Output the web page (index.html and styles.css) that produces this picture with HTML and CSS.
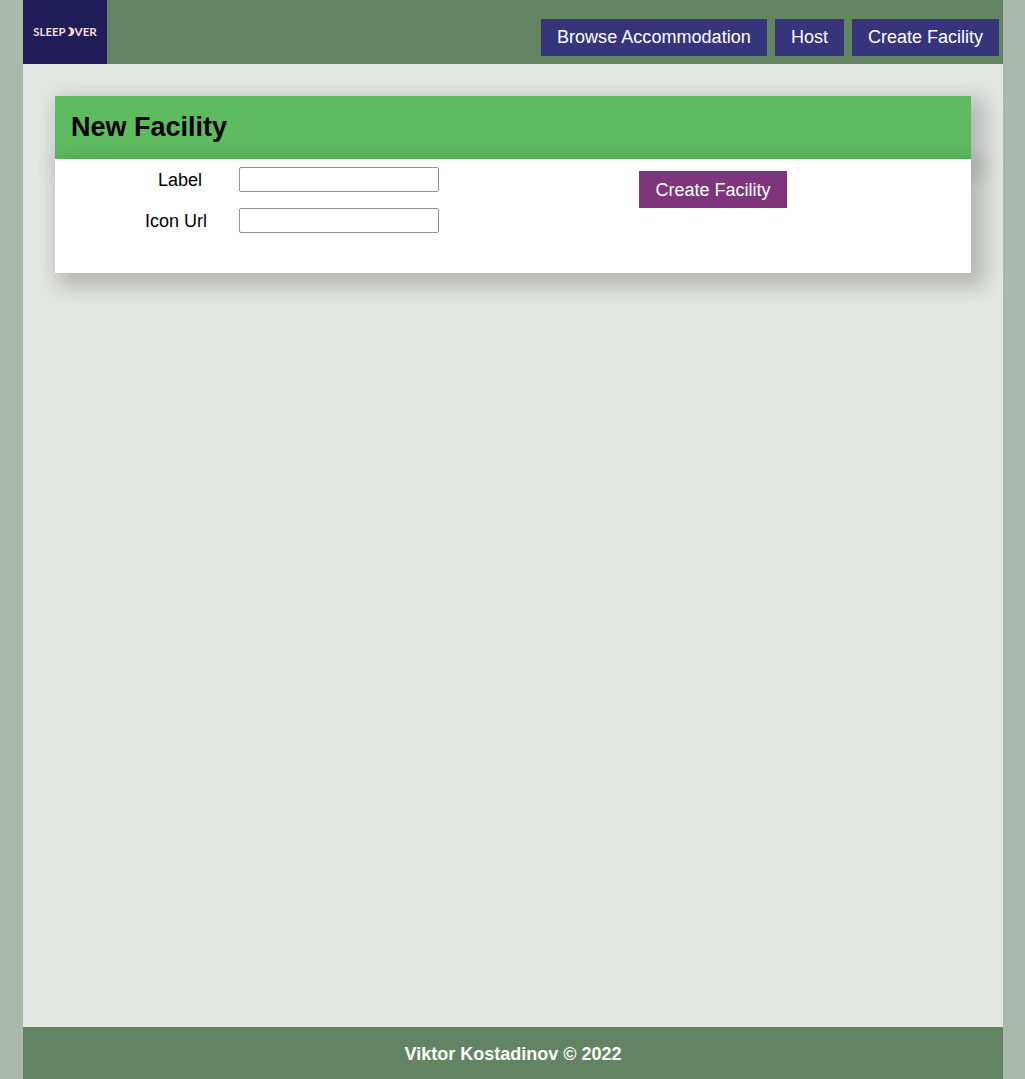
FILE: index.html
```html
<!DOCTYPE html>
<html lang="en">
<head>
<meta charset="utf-8">
<title>Sleepover</title>
<link rel="stylesheet" href="styles.css">
</head>
<body>
<div class="page">
  <header class="topbar">
    <a class="logo" href="#">
      <svg width="84" height="64" viewBox="0 0 84 64" aria-label="Sleepover">
        <g class="logo-text">
          <text x="10.3" y="36" textLength="32.2" lengthAdjust="spacingAndGlyphs">SLEEP</text>
          <text x="51.6" y="36" textLength="22.2" lengthAdjust="spacingAndGlyphs">VER</text>
        </g>
        <path class="moon" d="M44.6 28A4.3 4.3 0 1 1 44.6 35.2A3.65 3.65 0 0 0 44.6 28Z"/>
      </svg>
    </a>
    <nav class="nav">
      <a class="button browse" href="#">Browse Accommodation</a>
      <a class="button" href="#">Host</a>
      <a class="button" href="#">Create Facility</a>
    </nav>
  </header>
  <main class="content">
    <h1 class="title">New Facility</h1>
    <form class="form">
      <div class="fields">
        <label class="label" for="label">Label</label>
        <input class="input" id="label" type="text">
        <label class="label label-icon" for="icon">Icon Url</label>
        <input class="input" id="icon" type="text">
      </div>
      <button class="button submit" type="button">Create Facility</button>
    </form>
  </main>
  <footer class="footer">Viktor Kostadinov © 2022</footer>
</div>
</body>
</html>
```
FILE: styles.css
```css
* { box-sizing: border-box; }
body {
  margin: 0;
  background: #abb9ac;
  font: 18px/21px "Liberation Sans", Arial, sans-serif;
  color: #000;
}
.page {
  width: 980px;
  height: 1079px;
  margin-left: 23px;
  display: flex;
  flex-direction: column;
  background: #e4e6e3;
}
.topbar {
  height: 64px;
  display: flex;
  justify-content: space-between;
  align-items: flex-end;
  background: #638463;
}
.logo {
  width: 84px;
  height: 64px;
  background: #1f1c59;
}
.logo svg { display: block; }
.logo-text {
  font: 700 11.8px Lato, sans-serif;
  fill: #f5dfdc;
}
.moon { fill: #f7dccb; }
.nav {
  display: flex;
  gap: 8px;
  padding: 0 4px 8px 0;
}
.button {
  display: block;
  height: 37px;
  padding: 8px 16px;
  background: #36357c;
  color: #fff;
  font: inherit;
  text-decoration: none;
  white-space: nowrap;
}
.browse {
  width: 226px;
  letter-spacing: 0.04px;
}
.content {
  flex: 1;
  padding: 32px;
}
.title,
.form {
  box-shadow: 8px 8px 20px 6px rgba(0, 0, 0, 0.2);
}
.title {
  height: 63px;
  margin: 0;
  padding: 15px 16px;
  background: #5ebb60;
  font-size: 27px;
  line-height: 33px;
}
.form {
  height: 114px;
  display: flex;
  padding: 8px 0;
  background: #fff;
}
.fields {
  width: 584px;
  display: grid;
  grid-template-columns: 184px 200px;
  grid-template-rows: 25px 25px;
  row-gap: 16px;
}
.label {
  padding: 3px 37px 0 0;
  text-align: right;
}
.label-icon { padding-right: 32px; }
.input {
  width: 200px;
  height: 25px;
  border: 1px solid #8f8f9d;
  border-radius: 2px;
  background: #fff;
  font: inherit;
}
.submit {
  width: 148px;
  margin-top: 4px;
  padding: 9px 16px 7px;
  border: 0;
  background: #7f357c;
}
.footer {
  height: 52px;
  padding-top: 17px;
  background: #638463;
  color: #fff;
  font-weight: bold;
  text-align: center;
}
```
